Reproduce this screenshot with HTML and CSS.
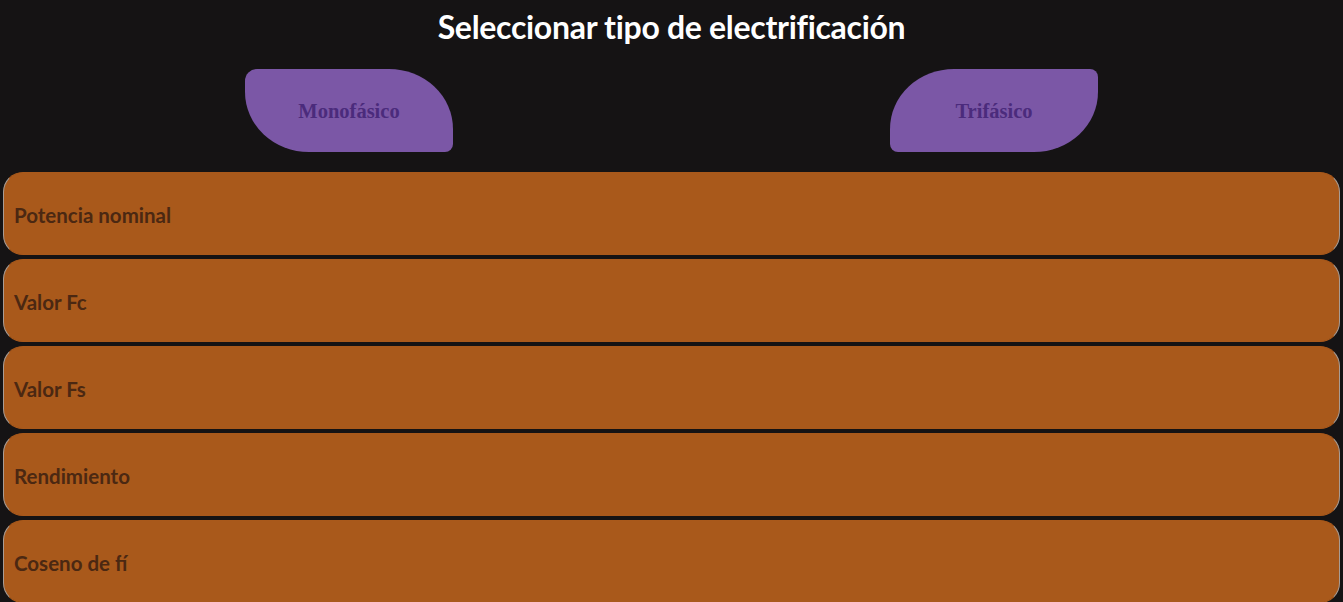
FILE: index.html
```html
<!DOCTYPE html>
<html lang="es">
<head>
    <meta charset="UTF-8">
    <meta name="viewport" content="width=device-width, initial-scale=1.0">
    <title>Seleccionar tipo de electrificación</title>
    <link rel="stylesheet" href="styles.css">
</head>
<body>
    <h1 class="titulo">Seleccionar tipo de electrificación</h1>

    <div class="botones">
        <button class="boton boton-izq">Monofásico</button>
        <button class="boton boton-der">Trifásico</button>
    </div>

    <div class="lista">
        <div class="campo">Potencia nominal</div>
        <div class="campo">Valor Fc</div>
        <div class="campo">Valor Fs</div>
        <div class="campo">Rendimiento</div>
        <div class="campo">Coseno de fí</div>
    </div>
</body>
</html>
```

FILE: styles.css
```css
/* tipo de electrificacion */
body {
    margin: 0;
    background-color: #151314;
    font-family: 'Lato', 'Liberation Sans', sans-serif;
    color: #ffffff;
}

.titulo {
    margin: 8px 0 0;
    font-size: 32px;
    line-height: 38px;
    font-weight: bold;
    text-align: center;
    letter-spacing: -0.3px;
}

.botones {
    display: flex;
    justify-content: center;
    gap: 437px;
    margin-top: 23px;
}

.boton {
    width: 208px;
    height: 83px;
    padding-top: 3px;
    border: none;
    background-color: #7b57a6; /* morado */
    color: #4b2b7c;
    font-family: 'Liberation Serif', 'Times New Roman', serif;
    font-weight: bold;
    font-size: 20.5px;
    cursor: pointer;
}

.boton-izq {
    border-radius: 12px 64px 8px 64px / 12px 60px 8px 60px;
}

.boton-der {
    border-radius: 64px 8px 64px 8px / 60px 8px 60px 8px;
}

.lista {
    display: flex;
    flex-direction: column;
    gap: 4px;
    margin-top: 20px;
    padding: 0 3px;
}

.campo {
    box-sizing: border-box;
    height: 83px;
    display: flex;
    align-items: center;
    padding-left: 10px;
    padding-top: 2px;
    background-color: #a9591b; /* naranja */
    border: 1px solid #a89c94;
    border-top-color: #a9591b;
    border-bottom-color: #a9591b;
    border-radius: 20px;
    color: #4b2812;
    font-size: 20.5px;
    font-weight: bold;
}
```
